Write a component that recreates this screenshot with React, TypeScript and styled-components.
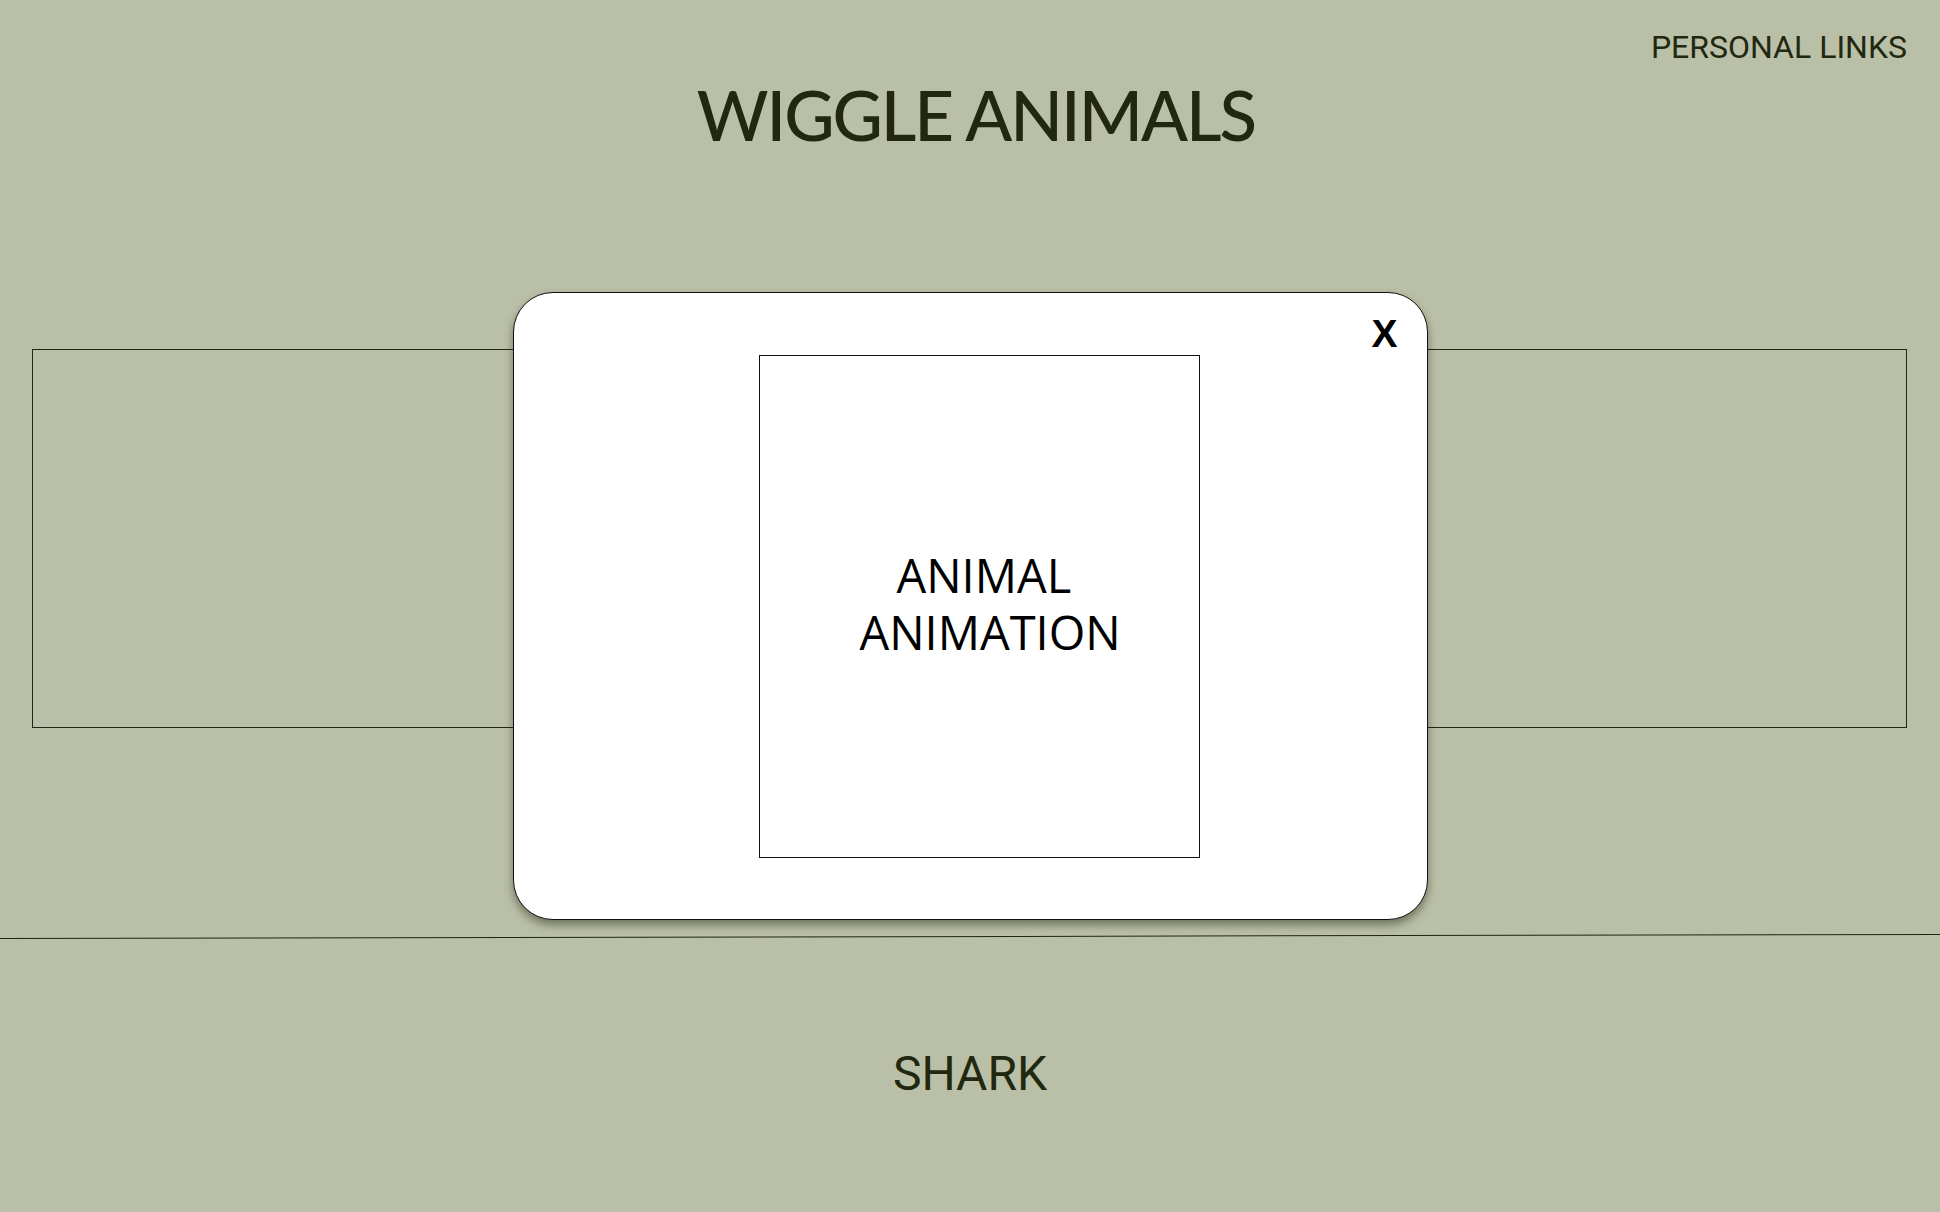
import React from 'react';
import styled, { createGlobalStyle } from 'styled-components';

const colors = {
  page: '#babfa7',
  ink: '#22280f',
  line: '#1f2414',
  card: '#ffffff',
};

const GlobalStyle = createGlobalStyle`
  html, body {
    margin: 0;
    padding: 0;
    background: ${colors.page};
  }
  body {
    font-family: Roboto, "Liberation Sans", sans-serif;
    color: ${colors.ink};
  }
  * {
    box-sizing: border-box;
  }
`;

const Page = styled.div`
  width: 1940px;
  min-height: 1212px;
  overflow: hidden;
`;

const Header = styled.header`
  display: flex;
  flex-direction: column;
  align-items: center;
`;

const Nav = styled.nav`
  align-self: stretch;
  display: flex;
  justify-content: flex-end;
  padding: 28px 33px 0 0;
`;

const NavLink = styled.a`
  font-family: Roboto, sans-serif;
  font-size: 32px;
  line-height: 38px;
  color: ${colors.ink};
  text-decoration: none;
  text-transform: uppercase;
`;

const Title = styled.h1`
  margin: 14px 0 0;
  padding-left: 12px;
  font-family: Lato, "Noto Sans", sans-serif;
  font-weight: 500;
  font-size: 69px;
  line-height: 1;
  letter-spacing: -2px;
  color: ${colors.ink};
`;

const Stage = styled.section`
  position: relative;
  margin-top: 200px;
`;

const Track = styled.div`
  height: 379px;
  margin: 0 33px 0 32px;
  border: 1px solid ${colors.line};
`;

const Modal = styled.div`
  position: absolute;
  top: -57px;
  left: 0;
  right: 0;
  margin: 0 auto;
  width: 915px;
  height: 628px;
  display: flex;
  align-items: center;
  padding-left: 245px;
  background: ${colors.card};
  border: 1px solid #111;
  border-radius: 40px;
  box-shadow: 0 5px 8px rgba(40, 45, 25, 0.5);
`;

const CloseButton = styled.button`
  position: absolute;
  top: 18px;
  right: 29px;
  padding: 0;
  border: none;
  background: none;
  font-family: "Liberation Sans", Arial, sans-serif;
  font-weight: 700;
  font-size: 39px;
  line-height: 1.2;
  color: #000;
  cursor: pointer;
`;

const Preview = styled.div`
  width: 441px;
  height: 503px;
  display: flex;
  align-items: center;
  justify-content: center;
  padding: 0 0 4px 22px;
  border: 1px solid #111;
`;

const PreviewText = styled.p`
  margin: 0;
  font-family: "Open Sans", "Noto Sans", sans-serif;
  font-size: 47px;
  line-height: 57px;
  text-align: center;
  color: #000;
`;

const Divider = styled.hr`
  margin: 208px 0 0;
  height: 0;
  border: none;
  border-top: 1.5px solid ${colors.line};
  transform: rotate(-0.12deg);
`;

const Label = styled.h2`
  margin: 108px 0 0;
  font-family: Roboto, sans-serif;
  font-weight: 400;
  font-size: 48px;
  line-height: normal;
  text-align: center;
  color: ${colors.ink};
`;

export default function App() {
  return (
    <Page>
      <GlobalStyle />
      <Header>
        <Nav>
          <NavLink href="#links">Personal Links</NavLink>
        </Nav>
        <Title>WIGGLE ANIMALS</Title>
      </Header>

      <Stage>
        <Track />
        <Modal role="dialog">
          <CloseButton aria-label="Close">X</CloseButton>
          <Preview>
            <PreviewText>
              ANIMAL&nbsp;
              <br />
              ANIMATION
            </PreviewText>
          </Preview>
        </Modal>
      </Stage>

      <Divider />
      <Label>SHARK</Label>
    </Page>
  );
}
